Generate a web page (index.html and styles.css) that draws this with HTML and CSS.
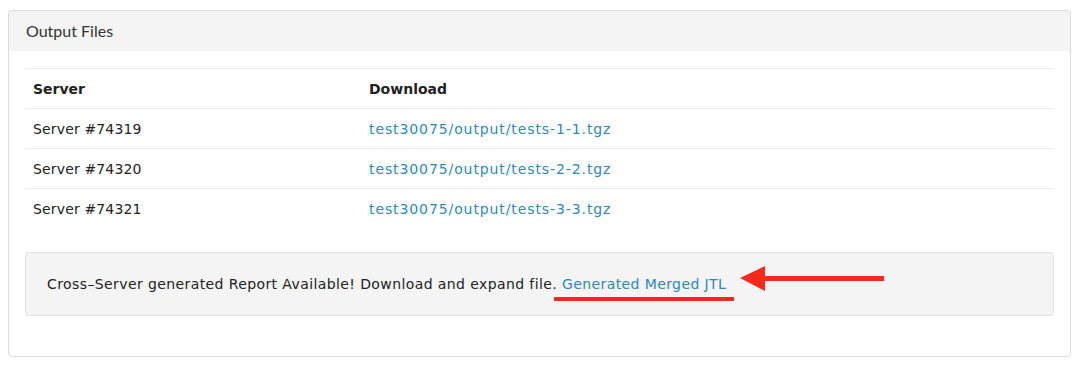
FILE: index.html
```html
<!DOCTYPE html>
<html lang="en">
<head>
  <meta charset="UTF-8">
  <title>Output Files</title>
  <link rel="stylesheet" href="styles.css">
</head>
<body>

  <div class="panel">
    <div class="panel-heading">Output Files</div>
    <div class="panel-body">
      <table class="files-table">
        <thead>
          <tr>
            <th class="col-server">Server</th>
            <th>Download</th>
          </tr>
        </thead>
        <tbody>
          <tr>
            <td>Server #74319</td>
            <td><a href="#">test30075/output/tests-1-1.tgz</a></td>
          </tr>
          <tr>
            <td>Server #74320</td>
            <td><a href="#">test30075/output/tests-2-2.tgz</a></td>
          </tr>
          <tr>
            <td>Server #74321</td>
            <td><a href="#">test30075/output/tests-3-3.tgz</a></td>
          </tr>
        </tbody>
      </table>

      <div class="well">
        Cross–Server generated Report Available! Download and expand file.
        <span class="marked"><a href="#">Generated Merged JTL</a><svg class="pointer" width="150" height="30" viewBox="0 0 150 30">
            <polygon points="0,12 25,0 25,25" fill="#f5291c"/>
            <rect x="24" y="10" width="120" height="5" fill="#f5291c"/>
          </svg></span>
      </div>
    </div>
  </div>

</body>
</html>
```

FILE: styles.css
```css
body {
  margin: 0;
  padding: 10px 9px 0 8px;
  font-family: "DejaVu Sans", Verdana, sans-serif;
  font-size: 14px;
  color: #222;
  background: #fff;
}

a {
  color: #2b88c1;
  text-decoration: none;
}

.panel {
  border: 1px solid #dcdcdc;
  border-radius: 4px;
  background: #fff;
  height: 347px;
  box-sizing: border-box;
}

.panel-heading {
  background: #f4f4f4;
  height: 40px;
  line-height: 40px;
  padding: 0 17px;
  font-family: Lato, "Open Sans", sans-serif;
  font-size: 16px;
  color: #333;
  border-radius: 4px 4px 0 0;
}

.panel-body {
  padding: 17px 16px 16px 16px;
}

.files-table {
  width: 100%;
  border-collapse: collapse;
  margin-bottom: 24px;
}

.files-table th,
.files-table td {
  text-align: left;
  padding: 9px 8px 7px 8px;
  line-height: 23px;
  border-top: 1px solid #ededed;
}

.files-table th {
  font-weight: bold;
  border-bottom: 1px solid #ededed;
}

.files-table td {
  letter-spacing: 0.15px;
}

.files-table td a {
  letter-spacing: 0.9px;
}

.col-server {
  width: 320px;
}

.well {
  background: #f4f4f4;
  border: 1px solid #e2e2e2;
  border-radius: 4px;
  padding: 19px 21px;
  line-height: 24px;
  letter-spacing: 0.4px;
}

.marked {
  position: relative;
}

.marked::after {
  content: "";
  position: absolute;
  left: -8px;
  right: -8px;
  bottom: -9px;
  height: 4px;
  background: #f5291c;
}

.pointer {
  position: absolute;
  left: 178px;
  top: -10px;
}
```
